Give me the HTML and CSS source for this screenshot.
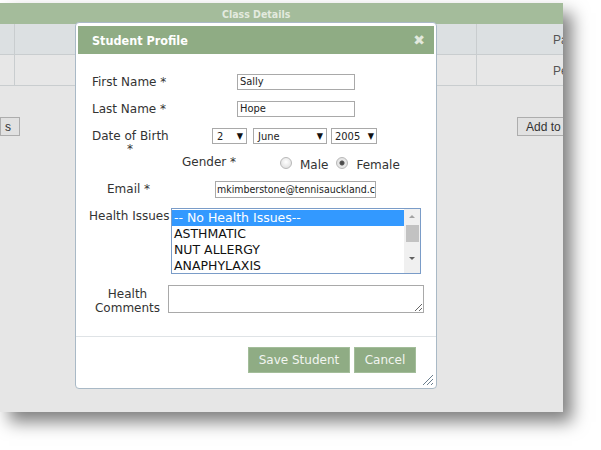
FILE: index.html
```html
<!DOCTYPE html>
<html>
<head>
<meta charset="utf-8">
<link rel="stylesheet" href="styles.css">
</head>
<body>
<div class="window">
  <div class="topbar"><span class="topbar-title">Class Details</span></div>
  <div class="trow trow-a">
    <div class="tcell c1"></div><div class="tcell c2"></div><div class="tcell c3">Pa</div>
  </div>
  <div class="trow trow-b">
    <div class="tcell c1"></div><div class="tcell c2"></div><div class="tcell c3">Pe</div>
  </div>
  <div class="toolbar">
    <button class="gbtn gbtn-left">s</button>
    <button class="gbtn gbtn-right">Add to</button>
  </div>

  <div class="dialog">
    <div class="dlg-head">
      <span class="dlg-title">Student Profile</span>
      <span class="dlg-close">&#x2716;</span>
    </div>
    <div class="dlg-body">
      <div class="row row-first">
        <label class="lbl lbl-name">First Name *</label>
        <div class="txt txt-name">Sally</div>
      </div>
      <div class="row row-last">
        <label class="lbl lbl-name">Last Name *</label>
        <div class="txt txt-name">Hope</div>
      </div>
      <div class="row row-dob">
        <label class="lbl lbl-dob">Date of Birth<br><span class="star">*</span></label>
        <div class="sel sel-day"><span>2</span><span class="arr">&#9660;</span></div>
        <div class="sel sel-month"><span>June</span><span class="arr">&#9660;</span></div>
        <div class="sel sel-year"><span>2005</span><span class="arr">&#9660;</span></div>
      </div>
      <div class="row row-gender">
        <label class="lbl lbl-gender">Gender *</label>
        <span class="radio"></span><span class="rtext">Male</span>
        <span class="radio radio-on"></span><span class="rtext">Female</span>
      </div>
      <div class="row row-email">
        <label class="lbl lbl-email">Email *</label>
        <div class="txt txt-email">mkimberstone@tennisauckland.co.nz</div>
      </div>
      <div class="row row-health">
        <label class="lbl lbl-health">Health Issues</label>
        <div class="listbox">
          <div class="items">
            <div class="item item-sel">-- No Health Issues--</div>
            <div class="item">ASTHMATIC</div>
            <div class="item">NUT ALLERGY</div>
            <div class="item">ANAPHYLAXIS</div>
          </div>
          <div class="sbar">
            <span class="sarrow sarrow-up"></span>
            <span class="sthumb"></span>
            <span class="sarrow sarrow-down"></span>
          </div>
        </div>
      </div>
      <div class="row row-comments">
        <label class="lbl lbl-comments">Health<br>Comments</label>
        <textarea class="comments"></textarea>
      </div>
    </div>
    <div class="dlg-foot">
      <button class="dbtn dbtn-save">Save Student</button>
      <button class="dbtn dbtn-cancel">Cancel</button>
    </div>
    <svg class="grip" width="12" height="12" viewBox="0 0 12 12">
      <line x1="11" y1="1" x2="1" y2="11" stroke="#6b7f8f" stroke-width="1"/>
      <line x1="11" y1="5" x2="5" y2="11" stroke="#6b7f8f" stroke-width="1"/>
      <line x1="11" y1="9" x2="9" y2="11" stroke="#6b7f8f" stroke-width="1"/>
    </svg>
  </div>
</div>
</body>
</html>
```

FILE: styles.css
```css
html, body {
  margin: 0;
  padding: 0;
  background: #ffffff;
}
body {
  width: 601px;
  height: 450px;
  overflow: hidden;
  font-family: "DejaVu Sans", Verdana, sans-serif;
}
.window {
  position: relative;
  margin-top: 3px;
  width: 563px;
  height: 409px;
  background: #e6e6e6;
  box-shadow: 9px 10px 16px rgba(0, 0, 0, 0.5);
}
.topbar {
  height: 21px;
  background: #a4bc9b;
  display: flex;
  align-items: center;
}
.topbar-title {
  margin-left: 222px;
  font: bold 10.5px "DejaVu Sans Condensed", "DejaVu Sans", sans-serif;
  color: #e3eadf;
}
.trow {
  display: grid;
  grid-template-columns: 15px 462px 86px;
  height: 31px;
  border-bottom: 1px solid #c9cdcf;
  box-sizing: border-box;
}
.trow-a { background: #dce0e2; }
.trow-b { background: #e7e7e7; }
.tcell {
  border-right: 1px solid #c9cdcf;
  box-sizing: border-box;
}
.c3 {
  border-right: none;
  font: 12px "Liberation Sans", Arial, sans-serif;
  color: #555;
  padding-top: 9px;
  padding-left: 76px;
  overflow: hidden;
  white-space: nowrap;
  text-align: left;
}
.toolbar {
  display: flex;
  justify-content: space-between;
  margin-top: 31px;
}
.gbtn {
  font: 12px "Liberation Sans", Arial, sans-serif;
  color: #333;
  background: #e1e1e1;
  border: 1px solid #adadad;
  height: 19px;
  padding: 0 4px;
  margin: 0;
}
.gbtn-left {
  width: 20px;
  text-align: left;
}
.gbtn-right {
  width: 46px;
  padding: 0 0 0 8px;
  text-align: left;
  border-right: none;
  overflow: hidden;
  white-space: nowrap;
}

/* dialog */
.dialog {
  position: absolute;
  left: 75px;
  top: 19px;
  width: 362px;
  height: 367px;
  box-sizing: border-box;
  background: #ffffff;
  border: 1px solid #a9b9c6;
  border-radius: 4px;
  padding: 3px 2px 0 2px;
}
.dlg-head {
  height: 28px;
  background: #8fac84;
  display: flex;
  align-items: center;
  justify-content: space-between;
  padding: 0 9px 0 14px;
}
.dlg-title {
  font: bold 12.5px "DejaVu Sans Condensed", "DejaVu Sans", sans-serif;
  color: #ffffff;
}
.dlg-close {
  font: bold 14px "DejaVu Sans", sans-serif;
  line-height: 14px;
  color: #e2e9de;
}
.dlg-body {
  padding-top: 20px;
  height: 262px;
  border-bottom: 1px solid #dfe3e6;
  margin: 0 -2px;
}
.row {
  display: flex;
  align-items: flex-start;
}
.lbl {
  font-size: 12px;
  line-height: 16px;
  color: #333;
}
.row-first { height: 27px; }
.row-last { height: 27px; }
.row-dob { height: 28px; }
.row-gender { height: 25px; }
.row-email { height: 27px; }
.row-health { height: 77px; }
.row-comments { height: 28px; }

.lbl-name {
  margin-left: 16px;
  width: 145px;
}
.txt {
  box-sizing: border-box;
  border: 1px solid #a9a9a9;
  font: 11px "DejaVu Sans Condensed", "DejaVu Sans", sans-serif;
  color: #222;
  padding: 0 2px;
  white-space: nowrap;
  overflow: hidden;
}
.txt-name {
  width: 118px;
  height: 16px;
  line-height: 14px;
}
.lbl-dob {
  margin-left: 16px;
  width: 120px;
  text-align: left;
  line-height: 13px;
  padding-top: 2px;
}
.star {
  display: inline-block;
  width: 76px;
  text-align: center;
}
.sel {
  box-sizing: border-box;
  height: 16px;
  border: 1px solid #a9a9a9;
  font: 11px "DejaVu Sans Condensed", "DejaVu Sans", sans-serif;
  color: #222;
  display: flex;
  justify-content: space-between;
  align-items: center;
  padding: 0 3px 0 4px;
}
.arr {
  font-size: 9px;
  color: #111;
}
.sel-day { width: 35px; }
.sel-month { width: 74px; margin-left: 6px; }
.sel-year { width: 46px; margin-left: 4px; padding-left: 3px; padding-right: 2px; }
.lbl-gender {
  margin-left: 106px;
  width: 98px;
  margin-top: -2px;
}
.radio {
  box-sizing: border-box;
  width: 12px;
  height: 12px;
  border-radius: 50%;
  border: 1px solid #b8b8b8;
  background: radial-gradient(circle at 50% 40%, #ffffff 0, #e4e4e4 70%);
  margin-top: 1px;
}
.radio-on {
  margin-left: 8px;
  background: radial-gradient(circle, #444 0, #555 2px, #e8e8e8 3px, #e4e4e4 70%);
}
.rtext {
  font-size: 12px;
  line-height: 16px;
  color: #333;
  margin-left: 8px;
  margin-top: 1px;
}
.lbl-email {
  margin-left: 31px;
  width: 108px;
}
.txt-email {
  width: 161px;
  height: 17px;
  line-height: 15px;
  padding: 0 1px;
  font-size: 10.5px;
}
.lbl-health {
  margin-left: 13px;
  width: 82px;
}
.listbox {
  box-sizing: border-box;
  width: 250px;
  height: 66px;
  border: 1px solid #7a9cc8;
  display: flex;
  background: #fff;
}
.items {
  flex: 1;
  padding-top: 1px;
}
.item {
  font: 12.5px Tahoma, "DejaVu Sans", Verdana, sans-serif;
  height: 16px;
  line-height: 16px;
  padding-left: 2px;
  color: #111;
  white-space: nowrap;
}
.item-sel {
  background: #3399ff;
  color: #fff;
}
.sbar {
  width: 16px;
  background: #f0f0f0;
  display: flex;
  flex-direction: column;
  align-items: center;
}
.sarrow {
  width: 0;
  height: 0;
  border-left: 3px solid transparent;
  border-right: 3px solid transparent;
}
.sarrow-up {
  border-bottom: 3px solid #a3a3a3;
  margin-top: 6px;
}
.sarrow-down {
  border-top: 3px solid #606060;
  margin-top: 15px;
}
.sthumb {
  width: 13px;
  height: 17px;
  background: #c2c2c2;
  margin-top: 7px;
}
.lbl-comments {
  margin-left: 16px;
  width: 71px;
  margin-right: 5px;
  text-align: center;
  line-height: 14px;
  padding-top: 2px;
}
.comments {
  box-sizing: border-box;
  width: 256px;
  height: 28px;
  border: 1px solid #a9a9a9;
  margin: 0;
  padding: 0;
  resize: both;
}
.dlg-foot {
  display: flex;
  justify-content: flex-end;
  gap: 4px;
  padding: 10px 18px 0 0;
}
.dbtn {
  height: 26px;
  background: #8fac84;
  border: 1px solid #a3bd9a;
  color: #f2f5f0;
  font: 12px "DejaVu Sans", Verdana, sans-serif;
  padding: 0;
  margin: 0;
}
.dbtn-save { width: 102px; }
.dbtn-cancel { width: 62px; }
.grip {
  position: absolute;
  right: 2px;
  bottom: 2px;
}
```
